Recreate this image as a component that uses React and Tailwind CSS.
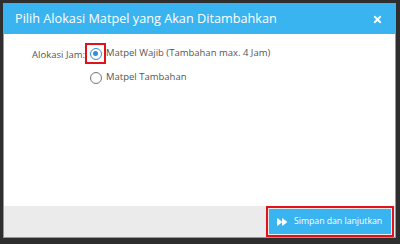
import { FaTimes, FaForward } from 'react-icons/fa';

function Radio({ checked }) {
  return (
    <span
      className={`flex h-[12px] w-[12px] items-center justify-center rounded-full border-[1.5px] bg-white ${
        checked ? 'border-[#2f8fd8]' : 'border-[#777]'
      }`}
    >
      {checked && <span className="h-[5px] w-[5px] rounded-full bg-[#2f8fd8]" />}
    </span>
  );
}

export default function App() {
  return (
    <div
      className="h-[244px] w-[400px] overflow-hidden bg-[#2e2e2e] px-[3px] pt-[3px]"
      style={{ fontFamily: '"Open Sans", "Noto Sans", sans-serif' }}
    >
      <div className="flex h-[235px] w-[393px] flex-col border border-[#3ab4f0]">
        {/* Header */}
        <div className="flex h-[30px] items-center justify-between bg-[#3ab4f0] pl-[11px] pr-[12px]">
          <span className="text-[12.7px] text-white">Pilih Alokasi Matpel yang Akan Ditambahkan</span>
          <FaTimes className="text-[11px] text-white" />
        </div>

        {/* Body */}
        <div className="flex-1 bg-white pt-[9px] text-[9.5px] text-[#555]">
          <div className="flex items-start">
            <div className="w-[81px] pt-[5px] text-right">Alokasi Jam:</div>
            <div className="flex flex-col gap-[3px]">
              <div className="flex items-center">
                <span className="flex h-[21px] w-[21px] items-center justify-center border-2 border-[#e0121c]">
                  <Radio checked />
                </span>
                <span>Matpel Wajib (Tambahan max. 4 Jam)</span>
              </div>
              <div className="flex items-center">
                <span className="flex h-[21px] w-[21px] items-center justify-center">
                  <Radio />
                </span>
                <span>Matpel Tambahan</span>
              </div>
            </div>
          </div>
        </div>

        {/* Footer */}
        <div className="flex h-[31px] items-center justify-end bg-[#ebebeb] pr-[1px]">
          <div className="border-2 border-[#e0121c] p-[1px]">
            <button className="flex h-[25px] w-[122px] items-center gap-[7px] bg-[#3ab4f0] pl-[8px] text-[8.7px] text-white">
              <FaForward className="text-[10px]" />
              Simpan dan lanjutkan
            </button>
          </div>
        </div>
      </div>
    </div>
  );
}
